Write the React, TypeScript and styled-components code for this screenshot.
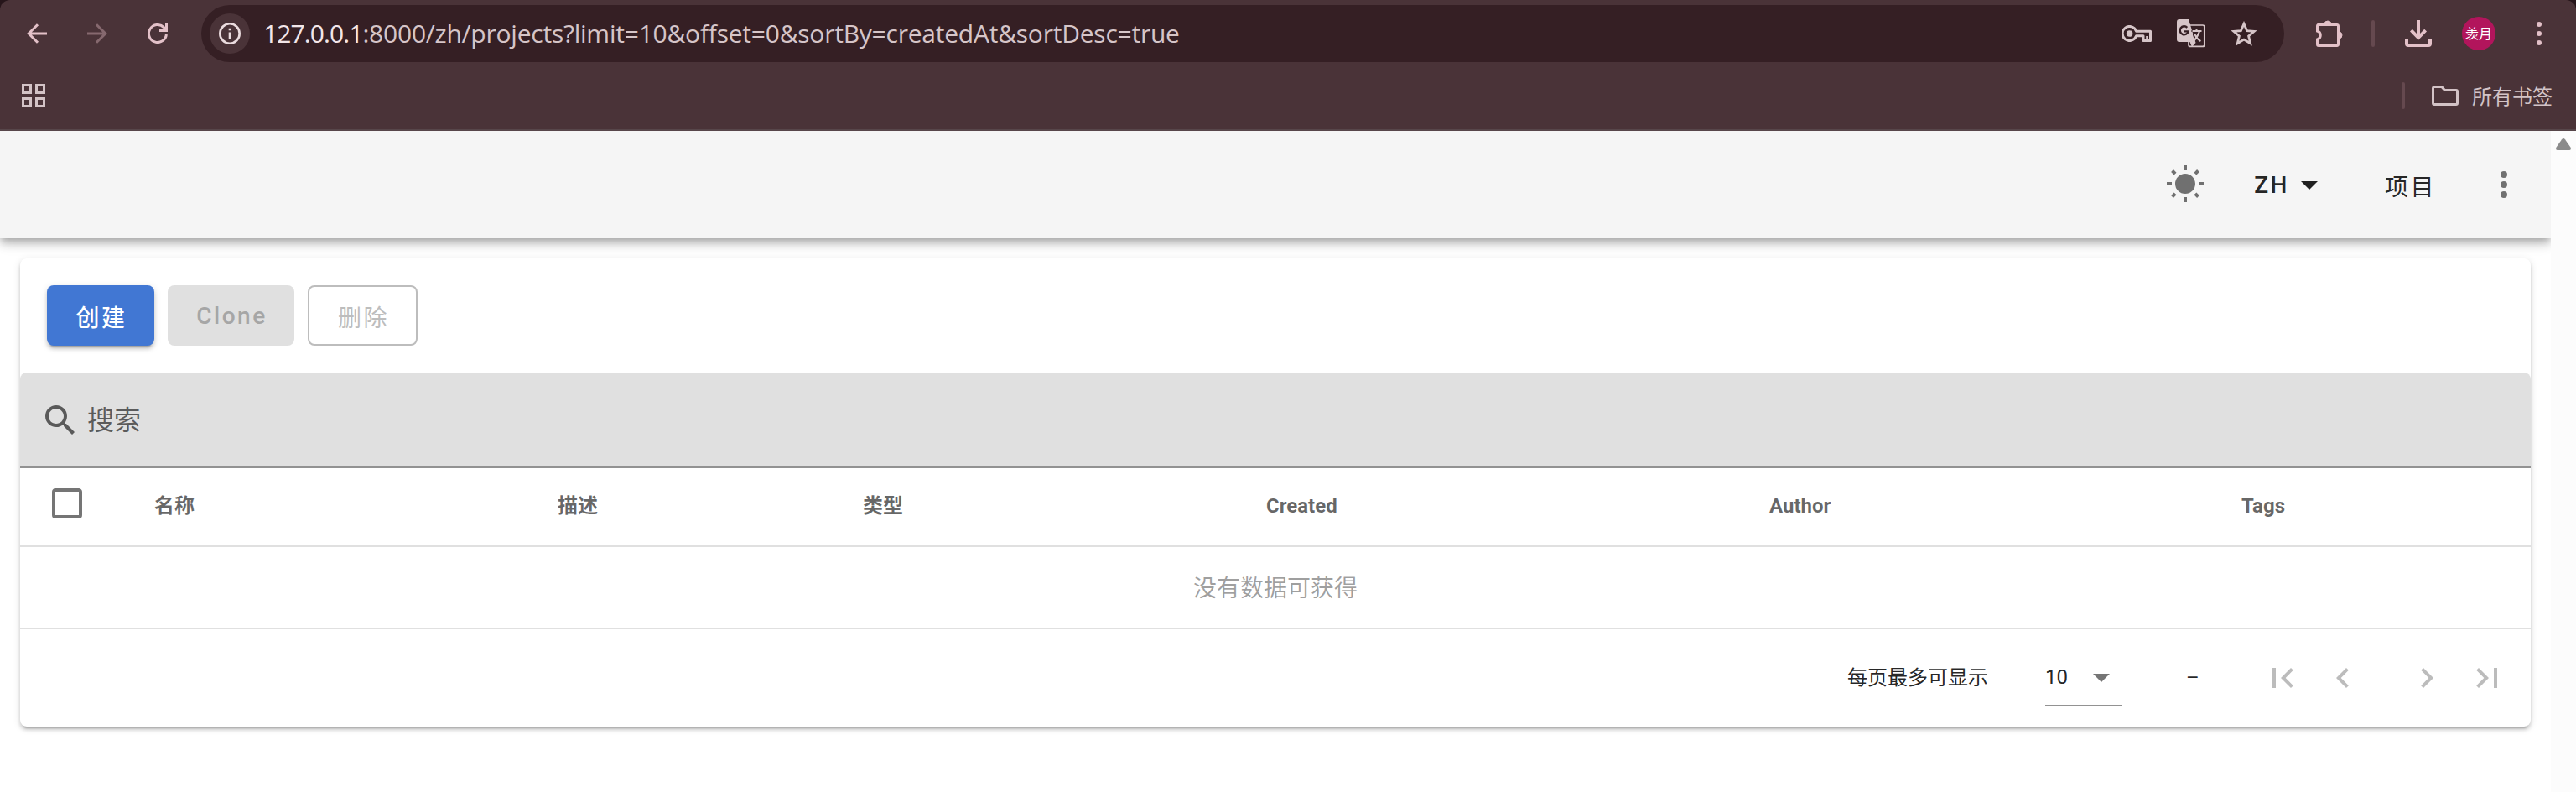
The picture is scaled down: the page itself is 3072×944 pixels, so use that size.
import React from "react";
import styled, { createGlobalStyle } from "styled-components";

const ui = `Roboto, "Noto Sans CJK SC", sans-serif`;
const chromeFont = `"Open Sans", "Noto Sans CJK SC", sans-serif`;

const GlobalStyle = createGlobalStyle`
  * { box-sizing: border-box; }
  html, body { margin: 0; background: #fff; }
  body { font-family: ${ui}; overflow: hidden; }
  svg { display: block; flex: none; }
  button { font: inherit; color: inherit; border: 0; background: none; padding: 0; margin: 0; }
`;

const Window = styled.div`
  width: 3072px;
  height: 944px;
  display: flex;
  flex-direction: column;
  background: #26151a;
`;

/* Browser frame */
const BrowserChrome = styled.header`
  height: 156px;
  flex: none;
  background: #4a3338;
  border-radius: 12px 12px 0 0;
  border-bottom: 2px solid #57464a;
  color: #e3c1c8;
  font-family: ${chromeFont};
`;

const AddressRow = styled.div`
  height: 80px;
  display: flex;
  align-items: center;
  padding: 0 41px 0 32px;
`;

const NavButtons = styled.nav`
  display: flex;
  gap: 48px;
`;

const NavButton = styled.button<{ $dim?: boolean }>`
  color: ${(p) => (p.$dim ? "#86696f" : "#e3c1c8")};
`;

const Omnibox = styled.div`
  flex: 1;
  height: 68px;
  margin-left: 40px;
  padding: 0 32px 0 10px;
  border-radius: 34px;
  background: #351f24;
  display: flex;
  align-items: center;
  color: #d6c5c8;
`;

const SiteInfo = styled.button`
  width: 48px;
  height: 48px;
  border-radius: 50%;
  background: #4a3338;
  color: #ebdcdf;
  display: flex;
  align-items: center;
  justify-content: center;
`;

const Url = styled.div`
  flex: 1;
  margin-left: 16px;
  font-size: 30px;
  line-height: 40px;
  letter-spacing: -0.23px;
  white-space: nowrap;
`;

const Host = styled.span`
  color: #f3e6e9;
  letter-spacing: -0.9px;
`;

const OmniboxActions = styled.div`
  display: flex;
  align-items: center;
  gap: 30px;
`;

const BrowserActions = styled.div`
  display: flex;
  align-items: center;
  margin-left: 38px;
  gap: 36px;
`;

const Divider = styled.span`
  width: 4px;
  height: 32px;
  border-radius: 2px;
  background: #65494f;
`;

const ToolbarDivider = styled(Divider)`
  margin-left: -2px;
`;

const Avatar = styled.div`
  width: 40px;
  height: 40px;
  border-radius: 50%;
  background: #b2155c;
  color: #fff;
  font: 400 16px/40px ${chromeFont};
  text-align: center;
`;

const MoreButton = styled.button`
  margin-left: 13px;
`;

const BookmarkRow = styled.div`
  height: 74px;
  display: flex;
  align-items: center;
  justify-content: space-between;
  padding: 0 28px 6px 26px;
  color: #d3c3c6;
`;

const AllBookmarks = styled.div`
  display: flex;
  align-items: center;
  font-size: 24px;
  line-height: 32px;
`;

const FolderSlot = styled.span`
  margin: 0 16px 0 32px;
`;

const BookmarkLabel = styled.span`
  padding-top: 2px;
`;

/* Page */
const Viewport = styled.div`
  flex: 1;
  display: flex;
  background: #fff;
`;

const Page = styled.main`
  flex: 1;
  background: #fff;
  overflow: hidden;
`;

const ScrollTrack = styled.aside`
  width: 30px;
  background: #fcfcfc;
  padding: 9px 0 0 6px;
  color: #8b8b8b;
`;

const AppBar = styled.div`
  position: relative;
  height: 128px;
  padding-right: 32px;
  background: #f5f5f5;
  color: rgba(0, 0, 0, 0.87);
  display: flex;
  align-items: center;
  justify-content: flex-end;
  box-shadow: 0 4px 8px -2px rgba(0, 0, 0, 0.2), 0 8px 10px 0 rgba(0, 0, 0, 0.14),
    0 2px 20px 0 rgba(0, 0, 0, 0.12);
`;

const IconButton = styled.button`
  display: flex;
  color: rgba(0, 0, 0, 0.54);
`;

const BarLink = styled.button<{ $left: number; $right: number }>`
  display: flex;
  align-items: center;
  margin: 0 ${(p) => p.$right}px 0 ${(p) => p.$left}px;
  font-size: 28px;
  font-weight: 500;
  line-height: 40px;
  letter-spacing: 2.5px;
`;

const LanguageLabel = styled.span`
  padding-top: 2px;
`;

const ProjectLabel = styled.span`
  font-weight: 400;
  padding-top: 8px;
`;

const Card = styled.section`
  margin: 24px;
  height: 558px;
  border-radius: 8px;
  background: #fff;
  box-shadow: 0 6px 2px -4px rgba(0, 0, 0, 0.2), 0 4px 4px 0 rgba(0, 0, 0, 0.14),
    0 2px 10px 0 rgba(0, 0, 0, 0.12);
`;

const Actions = styled.div`
  display: flex;
  gap: 16px;
  padding: 32px;
`;

const ActionButton = styled.button<{ $kind: "primary" | "disabled" | "outlined"; $width: number }>`
  width: ${(p) => p.$width}px;
  height: 72px;
  border-radius: 8px;
  font-size: 28px;
  font-weight: ${(p) => (p.$kind === "outlined" ? 400 : 500)};
  letter-spacing: 2.5px;
  padding: ${(p) => (p.$kind === "disabled" ? 0 : 2)}px 0 0 2px;
  ${(p) =>
    p.$kind === "primary" &&
    `background: #4177d3; color: #fff;
     box-shadow: 0 6px 2px -4px rgba(0,0,0,.2), 0 4px 4px 0 rgba(0,0,0,.14), 0 2px 10px 0 rgba(0,0,0,.12);`}
  ${(p) => p.$kind === "disabled" && `background: #e0e0e0; color: #a6a6a6;`}
  ${(p) => p.$kind === "outlined" && `border: 2px solid #bdbdbd; color: #bdbdbd;`}
`;

const SearchField = styled.label`
  height: 114px;
  display: flex;
  align-items: center;
  gap: 8px;
  padding: 2px 24px 0;
  border-radius: 8px 8px 0 0;
  border-bottom: 2px solid #929292;
  background: #e0e0e0;
  color: rgba(0, 0, 0, 0.6);
  font-size: 32px;
  line-height: 40px;
`;

const HeaderRow = styled.div`
  height: 94px;
  display: grid;
  grid-template-columns: 128px 481px 364px 481px 600px 563px 1fr;
  align-items: center;
  border-bottom: 2px solid #e0e0e0;
  color: rgba(0, 0, 0, 0.6);
  font-size: 24px;
  font-weight: 700;
`;

const HeaderCell = styled.div`
  padding: 0 32px 3px;
  line-height: 32px;
`;

const CheckboxCell = styled.div`
  padding: 0 32px 8px;
`;

const EmptyRow = styled.div`
  height: 98px;
  padding-top: 2px;
  border-bottom: 2px solid #e0e0e0;
  color: rgba(0, 0, 0, 0.38);
  font-size: 28px;
  line-height: 96px;
  text-align: center;
`;

const Footer = styled.footer`
  height: 116px;
  display: flex;
  align-items: center;
  justify-content: flex-end;
  padding-right: 28px;
  font-size: 24px;
  line-height: 32px;
  color: rgba(0, 0, 0, 0.87);
`;

const PageSize = styled.div`
  width: 91px;
  height: 68px;
  margin: 0 77px 0 68px;
  display: flex;
  align-items: center;
  justify-content: space-between;
  border-bottom: 2px solid #929292;
  color: rgba(0, 0, 0, 0.87);
`;

const SelectArrow = styled.span`
  color: rgba(0, 0, 0, 0.54);
`;

const Range = styled.span`
  width: 12px;
  margin-right: 79px;
`;

const Pager = styled.div`
  display: flex;
  color: #bcbcbc;
`;

const PagerPair = styled.div`
  display: flex;
  gap: 24px;
  & + & {
    margin-left: 52px;
  }
`;

const Mdi = ({ d }: { d: string }) => (
  <svg width="48" height="48" viewBox="0 0 24 24" fill="currentColor">
    <path d={d} />
  </svg>
);

const icons = {
  sun: "M3.55,18.54L4.96,19.95L6.76,18.16L5.34,16.74M11,22.45C11.32,22.45 13,22.45 13,22.45V19.5H11M12,5.5A6,6 0 0,0 6,11.5A6,6 0 0,0 12,17.5A6,6 0 0,0 18,11.5C18,8.18 15.31,5.5 12,5.5M20,12.5H23V10.5H20M17.24,18.16L19.04,19.95L20.45,18.54L18.66,16.74M20.45,4.46L19.04,3.05L17.24,4.84L18.66,6.26M13,0.55H11V3.5H13M4,10.5H1V12.5H4M6.76,4.84L4.96,3.05L3.55,4.46L5.34,6.26L6.76,4.84Z",
  menuDown: "M7,10L12,15L17,10H7Z",
  dots: "M12,16A2,2 0 0,1 14,18A2,2 0 0,1 12,20A2,2 0 0,1 10,18A2,2 0 0,1 12,16M12,10A2,2 0 0,1 14,12A2,2 0 0,1 12,14A2,2 0 0,1 10,12A2,2 0 0,1 12,10M12,4A2,2 0 0,1 14,6A2,2 0 0,1 12,8A2,2 0 0,1 10,6A2,2 0 0,1 12,4Z",
  magnify:
    "M9.5,3A6.5,6.5 0 0,1 16,9.5C16,11.11 15.41,12.59 14.44,13.73L14.71,14H15.5L20.5,19L19,20.5L14,15.5V14.71L13.73,14.44C12.59,15.41 11.11,16 9.5,16A6.5,6.5 0 0,1 3,9.5A6.5,6.5 0 0,1 9.5,3M9.5,5C7,5 5,7 5,9.5C5,12 7,14 9.5,14C12,14 14,12 14,9.5C14,7 12,5 9.5,5Z",
  checkbox: "M19,3H5C3.89,3 3,3.89 3,5V19A2,2 0 0,0 5,21H19A2,2 0 0,0 21,19V5C21,3.89 20.1,3 19,3M19,5V19H5V5H19Z",
  first: "M18.41,16.59L13.82,12L18.41,7.41L17,6L11,12L17,18L18.41,16.59M6,6H8V18H6V6Z",
  prev: "M15.41,16.58L10.83,12L15.41,7.41L14,6L8,12L14,18L15.41,16.58Z",
  next: "M8.59,16.58L13.17,12L8.59,7.41L10,6L16,12L10,18L8.59,16.58Z",
  last: "M5.59,7.41L10.18,12L5.59,16.59L7,18L13,12L7,6L5.59,7.41M16,6H18V18H16V6Z",
};

const columns = ["名称", "描述", "类型", "Created", "Author", "Tags"];

const BackIcon = () => (
  <svg width="24" height="24" viewBox="0 0 24 24" fill="none" stroke="currentColor" strokeWidth="3">
    <path d="M24 12H3M13 1.2L2.2 12L13 22.8" />
  </svg>
);

const ForwardIcon = () => (
  <svg width="24" height="24" viewBox="0 0 24 24" fill="none" stroke="currentColor" strokeWidth="3">
    <path d="M0 12H21M11 1.2L21.8 12L11 22.8" />
  </svg>
);

const ReloadIcon = () => (
  <svg width="24" height="24" viewBox="0 0 24 24" fill="none" stroke="currentColor" strokeWidth="3">
    <path d="M22.4 13A10.5 10.5 0 1 1 19.4 4.6L22 7.6M22.5 0V8.5H14" />
  </svg>
);

const InfoIcon = () => (
  <svg width="26" height="26" viewBox="0 0 26 26" fill="none" stroke="currentColor" strokeWidth="2.6">
    <circle cx="13" cy="13" r="11.7" />
    <path d="M13 11.5V19M13 6.7V9.3" />
  </svg>
);

const KeyIcon = () => (
  <svg width="36" height="20" viewBox="0 0 36 20" fill="none" stroke="currentColor" strokeWidth="3" strokeLinejoin="round">
    <circle cx="9.6" cy="10" r="3.8" fill="currentColor" stroke="none" />
    <path d="M17.6 7.2A8.5 8.5 0 1 0 17.6 12.8H26V18.5H34.5V7.2Z" />
    <path d="M30.2 13V17" strokeWidth="2" />
  </svg>
);

const TranslateIcon = () => (
  <svg width="34" height="34" viewBox="0 0 34 34">
    <rect x="14" y="7" width="18.8" height="25.4" rx="2" fill="none" stroke="currentColor" strokeWidth="1.7" />
    <path d="M3 0H14L22.5 28L18 33L15.5 27H3A3 3 0 0 1 0 24V3A3 3 0 0 1 3 0Z" fill="currentColor" />
    <path d="M12.3 9.8A5 5 0 1 0 13.6 14.4H8.6" fill="none" stroke="#351f24" strokeWidth="2.4" />
    <path
      d="M18.4 14H29.5M23.5 11V14M27 14.3Q24.5 21.5 20 26M21.2 17.8Q24 23.5 28.4 26.2"
      fill="none"
      stroke="currentColor"
      strokeWidth="2"
    />
    <path d="M17.2 14H18.4M19.6 17.5L20.6 21" stroke="#351f24" strokeWidth="1.6" />
  </svg>
);

const StarIcon = () => (
  <svg width="32" height="30" viewBox="0 0 32 30" fill="none" stroke="currentColor" strokeWidth="2.8">
    <path d="M16 3.4L19.6 11.6L28.2 12.3L21.6 18L23.7 26.8L16 22.1L8.3 26.8L10.4 18L3.8 12.3L12.4 11.6Z" />
  </svg>
);

const PuzzleIcon = () => (
  <svg width="32" height="32" viewBox="0 0 32 32">
    <path
      d="M3.3 5.4H25A1.5 1.5 0 0 1 26.5 6.9V29A1.5 1.5 0 0 1 25 30.5H3A1.5 1.5 0 0 1 1.5 29V23A5.2 5.2 0 0 0 1.5 13V6.9A1.5 1.5 0 0 1 3.3 5.4Z"
      fill="none"
      stroke="currentColor"
      strokeWidth="3"
    />
    <path d="M10 5A4 4 0 0 1 18 5ZM27 14A4 4 0 0 1 27 22Z" fill="currentColor" stroke="currentColor" />
  </svg>
);

const DownloadIcon = () => (
  <svg width="32" height="32" viewBox="0 0 32 32" fill="none" stroke="currentColor" strokeWidth="4">
    <path d="M16 0V21M7.4 12.2L16 20.8L24.6 12.2" />
    <path d="M2 22V28A2 2 0 0 0 4 30H28A2 2 0 0 0 30 28V22" />
  </svg>
);

const MoreIcon = () => (
  <svg width="6" height="28" viewBox="0 0 6 28" fill="currentColor">
    <circle cx="3" cy="3" r="3" />
    <circle cx="3" cy="14" r="3" />
    <circle cx="3" cy="25" r="3" />
  </svg>
);

const AppsIcon = () => (
  <svg width="28" height="28" viewBox="0 0 28 28" fill="none" stroke="currentColor" strokeWidth="3">
    <path d="M1.5 1.5H10.5V10.5H1.5ZM17.5 1.5H26.5V10.5H17.5ZM1.5 17.5H10.5V26.5H1.5ZM17.5 17.5H26.5V26.5H17.5Z" />
  </svg>
);

const FolderIcon = () => (
  <svg width="32" height="24" viewBox="0 0 32 24" fill="none" stroke="currentColor" strokeWidth="3" strokeLinejoin="round">
    <path d="M1.5 3V21A1.5 1.5 0 0 0 3 22.5H29A1.5 1.5 0 0 0 30.5 21V7A1.5 1.5 0 0 0 29 5.5H15.5L11.8 1.5H3A1.5 1.5 0 0 0 1.5 3Z" />
  </svg>
);

const ScrollUpIcon = () => (
  <svg width="18" height="14" viewBox="0 0 18 14" fill="currentColor">
    <path d="M7 1.2Q9 -1 11 1.2L17.4 10.6Q18.6 14 16 14H2Q-.6 14 .6 10.6Z" />
  </svg>
);

export default function App() {
  return (
    <Window>
      <GlobalStyle />
      <BrowserChrome>
        <AddressRow>
          <NavButtons>
            <NavButton><BackIcon /></NavButton>
            <NavButton $dim><ForwardIcon /></NavButton>
            <NavButton><ReloadIcon /></NavButton>
          </NavButtons>
          <Omnibox>
            <SiteInfo><InfoIcon /></SiteInfo>
            <Url>
              <Host>127.0.0.1</Host>:8000/zh/projects?limit=10&amp;offset=0&amp;sortBy=createdAt&amp;sortDesc=true
            </Url>
            <OmniboxActions>
              <KeyIcon />
              <TranslateIcon />
              <StarIcon />
            </OmniboxActions>
          </Omnibox>
          <BrowserActions>
            <PuzzleIcon />
            <ToolbarDivider />
            <DownloadIcon />
            <Avatar>羡月</Avatar>
            <MoreButton><MoreIcon /></MoreButton>
          </BrowserActions>
        </AddressRow>
        <BookmarkRow>
          <AppsIcon />
          <AllBookmarks>
            <Divider />
            <FolderSlot><FolderIcon /></FolderSlot>
            <BookmarkLabel>所有书签</BookmarkLabel>
          </AllBookmarks>
        </BookmarkRow>
      </BrowserChrome>
      <Viewport>
        <Page>
          <AppBar>
            <IconButton><Mdi d={icons.sun} /></IconButton>
            <BarLink $left={58} $right={66}>
              <LanguageLabel>ZH</LanguageLabel>
              <Mdi d={icons.menuDown} />
            </BarLink>
            <BarLink $left={0} $right={57}>
              <ProjectLabel>项目</ProjectLabel>
            </BarLink>
            <IconButton><Mdi d={icons.dots} /></IconButton>
          </AppBar>
          <Card>
            <Actions>
              <ActionButton $kind="primary" $width={128}>创建</ActionButton>
              <ActionButton $kind="disabled" $width={151}>Clone</ActionButton>
              <ActionButton $kind="outlined" $width={131}>删除</ActionButton>
            </Actions>
            <SearchField>
              <Mdi d={icons.magnify} />
              搜索
            </SearchField>
            <HeaderRow>
              <CheckboxCell>
                <IconButton><Mdi d={icons.checkbox} /></IconButton>
              </CheckboxCell>
              {columns.map((name) => (
                <HeaderCell key={name}>{name}</HeaderCell>
              ))}
            </HeaderRow>
            <EmptyRow>没有数据可获得</EmptyRow>
            <Footer>
              每页最多可显示
              <PageSize>
                10
                <SelectArrow><Mdi d={icons.menuDown} /></SelectArrow>
              </PageSize>
              <Range>–</Range>
              <Pager>
                <PagerPair>
                  <Mdi d={icons.first} />
                  <Mdi d={icons.prev} />
                </PagerPair>
                <PagerPair>
                  <Mdi d={icons.next} />
                  <Mdi d={icons.last} />
                </PagerPair>
              </Pager>
            </Footer>
          </Card>
        </Page>
        <ScrollTrack>
          <ScrollUpIcon />
        </ScrollTrack>
      </Viewport>
    </Window>
  );
}
